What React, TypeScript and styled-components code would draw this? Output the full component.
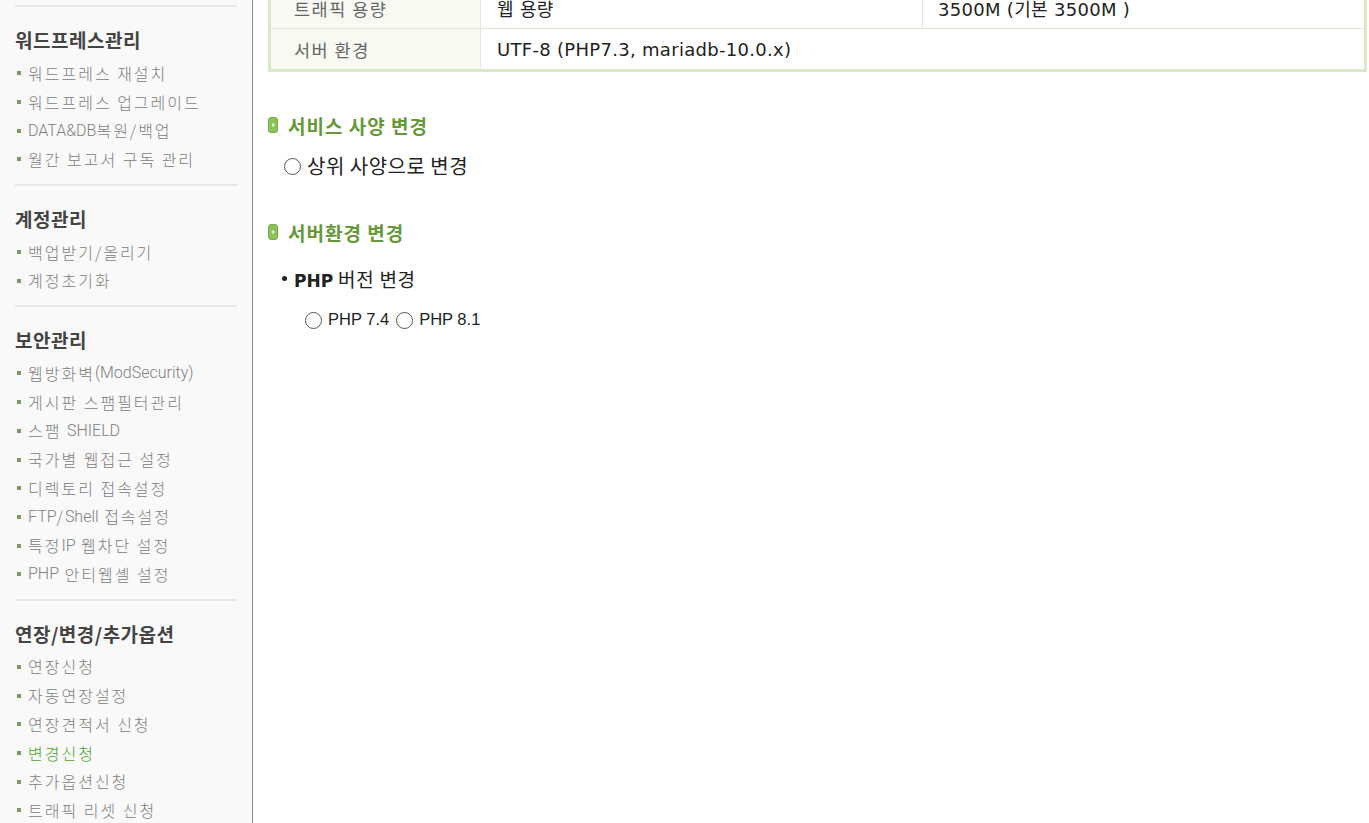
import React from "react";
import styled, { createGlobalStyle } from "styled-components";

const GlobalStyle = createGlobalStyle`
  html, body { margin: 0; padding: 0; background: #ffffff; overflow: hidden; }
  * { box-sizing: border-box; }
`;

const KR = `"Noto Sans CJK KR", "Noto Sans", sans-serif`;

const Layout = styled.div`
  display: flex;
  height: 823px;
  overflow: hidden;
`;

const Sidebar = styled.aside`
  width: 253px;
  flex: none;
  background: #f9f9f9;
  border-right: 1px solid #8c8c8c;
  padding: 5px 15px 0 15px;
  overflow: hidden;
  font-family: ${KR};
`;

const Divider = styled.div`
  height: 2px;
  background: #e7e7e7;
`;

const Group = styled.div`
  padding: 21px 0 10.5px 0;
`;

const GroupTitle = styled.h3`
  margin: 0 0 6.5px 0;
  font-size: 19px;
  line-height: 24px;
  font-weight: 700;
  color: #444;
  letter-spacing: 0.5px;
`;

const ItemList = styled.ul`
  list-style: none;
  margin: 0;
  padding: 0;
`;

const Item = styled.li<{ $active?: boolean }>`
  display: flex;
  align-items: center;
  height: 28.7px;
  font-family: ${KR};
  font-size: 16px;
  letter-spacing: 2px;
  color: ${(p) => (p.$active ? "#4ea52a" : "#808080")};
  font-weight: 300;
  white-space: pre;
  &::before {
    content: "";
    width: 4px;
    height: 4px;
    margin: 1px 7px 0 2px;
    background: #7d9964;
    flex: none;
  }
`;

const Latin = styled.span`
  font-family: Roboto, "Liberation Sans", sans-serif;
  font-weight: 300;
  letter-spacing: 0;
`;

const Main = styled.main`
  flex: 1;
  padding: 0 2px 0 15px;
  font-family: "Liberation Sans", ${KR};
`;

const InfoTable = styled.table`
  width: 100%;
  margin-top: -15px;
  border-collapse: collapse;
  border: 3px solid #d8e8c8;
`;

const Row = styled.tr`
  height: 42px;
`;

const LabelCell = styled.th`
  width: 211px;
  background: #f7f9f2;
  border: 1px solid #dfead3;
  text-align: left;
  font-weight: 400;
  color: #666;
  padding: 0 0 0 23px;
  font-family: ${KR};
  font-size: 17.5px;
  letter-spacing: 1.5px;
`;

const ValueCell = styled.td<{ $first?: boolean }>`
  border: 1px solid #dfead3;
  padding: 0 0 0 ${(p) => (p.$first ? 16 : 15)}px;
  color: #222;
  font-family: "DejaVu Sans", ${KR};
  font-size: 18px;
  letter-spacing: 0.3px;
  width: ${(p) => (p.$first ? "442px" : "auto")};
`;

const SectionTitle = styled.h4<{ $gap: number }>`
  display: flex;
  align-items: center;
  gap: 10px;
  margin: ${(p) => p.$gap}px 0 0 0;
  height: 24px;
  font-size: 19px;
  letter-spacing: 1px;
  font-weight: 700;
  color: #66983a;
  font-family: ${KR};
`;

const RadioRow = styled.label<{ $indent: number; $size: number; $gap: number; $h: number }>`
  display: flex;
  align-items: center;
  gap: 6px;
  margin-top: ${(p) => p.$gap}px;
  padding-left: ${(p) => p.$indent}px;
  height: ${(p) => p.$h}px;
  font-size: ${(p) => p.$size}px;
  color: #222;
`;

const SpecText = styled.span`
  font-family: ${KR};
  font-size: 20px;
  letter-spacing: 0.5px;
`;

const RadioLabel = styled.span`
  display: inline-flex;
  align-items: center;
  gap: 6px;
  margin-right: 1px;
`;

const Radio = styled.input.attrs({ type: "radio" })`
  appearance: none;
  -webkit-appearance: none;
  width: 17px;
  height: 17px;
  margin: 2px 0 0 0;
  border: 1.3px solid #555;
  border-radius: 50%;
  background: #fff;
  flex: none;
`;

const BulletLine = styled.div`
  display: flex;
  align-items: center;
  gap: 7px;
  margin-top: 21px;
  padding-left: 14px;
  height: 26px;
  font-size: 19px;
  letter-spacing: 0.7px;
  color: #222;
  font-family: ${KR};
  &::before {
    content: "";
    width: 5px;
    height: 5px;
    border-radius: 50%;
    background: #222;
    margin-top: 1px;
  }
  b {
    font-family: "DejaVu Sans", sans-serif;
    font-weight: 700;
    font-size: 17px;
    letter-spacing: 0;
  }
`;

const TitleIcon = () => (
  <svg width="10" height="16" viewBox="0 0 10 16" style={{ flex: "none" }}>
    <rect x="0.5" y="0.5" width="9" height="15" rx="2.5" fill="#8cc25a" stroke="#78ad46" />
    <path d="M4 6.5 L6 8 L4 9.5" fill="none" stroke="#ffffff" strokeWidth="1.2" />
  </svg>
);

const MixedText = ({ text }: { text: string }) => (
  <>
    {text.split(/([A-Za-z0-9&().]+)/).map((part, i) =>
      /[A-Za-z0-9&().]/.test(part) ? <Latin key={i}>{part}</Latin> : <React.Fragment key={i}>{part}</React.Fragment>
    )}
  </>
);

const groups: { title: string; items: string[] }[] = [
  { title: "워드프레스관리", items: ["워드프레스 재설치", "워드프레스 업그레이드", "DATA&DB복원/백업", "월간 보고서 구독 관리"] },
  { title: "계정관리", items: ["백업받기/올리기", "계정초기화"] },
  {
    title: "보안관리",
    items: [
      "웹방화벽(ModSecurity)",
      "게시판 스팸필터관리",
      "스팸 SHIELD",
      "국가별 웹접근 설정",
      "디렉토리 접속설정",
      "FTP/Shell 접속설정",
      "특정IP 웹차단 설정",
      "PHP 안티웹셸 설정",
    ],
  },
  {
    title: "연장/변경/추가옵션",
    items: ["연장신청", "자동연장설정", "연장견적서 신청", "변경신청", "추가옵션신청", "트래픽 리셋 신청"],
  },
];

export default function App() {
  return (
    <>
      <GlobalStyle />
      <Layout>
        <Sidebar>
          {groups.map((g) => (
            <React.Fragment key={g.title}>
              <Divider />
              <Group>
                <GroupTitle>{g.title}</GroupTitle>
                <ItemList>
                  {g.items.map((it) => (
                    <Item key={it} $active={it === "변경신청"}>
                      <MixedText text={it} />
                    </Item>
                  ))}
                </ItemList>
              </Group>
            </React.Fragment>
          ))}
        </Sidebar>
        <Main>
          <InfoTable>
            <tbody>
              <Row>
                <LabelCell>트래픽 용량</LabelCell>
                <ValueCell $first>웹 용량</ValueCell>
                <ValueCell>3500M (기본 3500M )</ValueCell>
              </Row>
              <Row>
                <LabelCell>서버 환경</LabelCell>
                <ValueCell $first colSpan={2}>
                  UTF-8 (PHP7.3, mariadb-10.0.x)
                </ValueCell>
              </Row>
            </tbody>
          </InfoTable>

          <SectionTitle $gap={41}>
            <TitleIcon />
            서비스 사양 변경
          </SectionTitle>
          <RadioRow $indent={16} $size={19} $gap={14} $h={28}>
            <Radio name="spec" />
            <SpecText>상위 사양으로 변경</SpecText>
          </RadioRow>

          <SectionTitle $gap={41}>
            <TitleIcon />
            서버환경 변경
          </SectionTitle>
          <BulletLine>
            <span>
              <b>PHP</b> 버전 변경
            </span>
          </BulletLine>
          <RadioRow as="div" $indent={37} $size={16.5} $gap={16} $h={24}>
            <RadioLabel>
              <Radio name="php" />
              PHP 7.4
            </RadioLabel>
            <RadioLabel>
              <Radio name="php" />
              PHP 8.1
            </RadioLabel>
          </RadioRow>
        </Main>
      </Layout>
    </>
  );
}
